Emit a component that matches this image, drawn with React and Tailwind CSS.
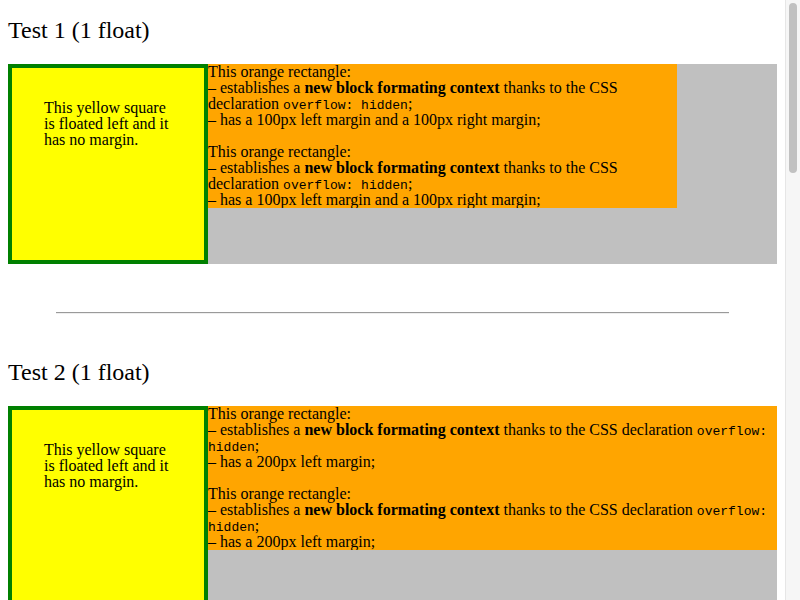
const tests = [
  { title: "Test 1 (1 float)", margin: "100px left margin and a 100px right margin", right: true },
  { title: "Test 2 (1 float)", margin: "200px left margin", right: false },
  { title: "Test 3 (1 float)", margin: "100px left margin and a 100px right margin", right: true },
];

function Para({ margin }) {
  return (
    <div>
      This orange rectangle:
      <br />– establishes a <b>new block formating context</b> thanks to the CSS declaration{" "}
      <code className="font-['Liberation_Mono',monospace] text-[13px] leading-[0]">overflow: hidden</code>;
      <br />– has a {margin};
    </div>
  );
}

function Test({ t, first }) {
  return (
    <section className={first ? "" : "mt-[44px]"}>
      <h2 className="mb-[20px] h-[28px] text-[24px] leading-[28px]">{t.title}</h2>
      <div className="flex h-[200px] items-start bg-[#c0c0c0]">
        <div className="h-[200px] w-[200px] shrink-0 border-4 border-[#008000] bg-[#ffff00] p-[32px]">
          This yellow square is floated left and it has no margin.
        </div>
        <div className={`min-w-0 flex-1 overflow-hidden bg-[#ffa500] ${t.right ? "mr-[100px]" : ""}`}>
          <Para margin={t.margin} />
          <div className="h-[16px]" />
          <Para margin={t.margin} />
        </div>
      </div>
      <hr className="mx-[48px] mt-[48px] border-t border-b border-t-[#9a9a9a] border-b-[#eeeeee]" />
    </section>
  );
}

export default function App() {
  return (
    <div className="flex h-[600px] overflow-hidden bg-white">
      <div className="min-w-0 flex-1 px-[8px] pt-[16px] font-['Liberation_Serif',serif] text-[16px] leading-[16px] text-black">
        {tests.map((t, i) => (
          <Test key={i} t={t} first={i === 0} />
        ))}
      </div>
      {/* page scrollbar */}
      <div className="w-[15px] shrink-0 border-l border-[#e6e6e6] bg-[#f6f6f6] pt-[3px]">
        <div className="mx-auto h-[170px] w-[8px] rounded-full bg-[#c1c1c1]" />
      </div>
    </div>
  );
}
